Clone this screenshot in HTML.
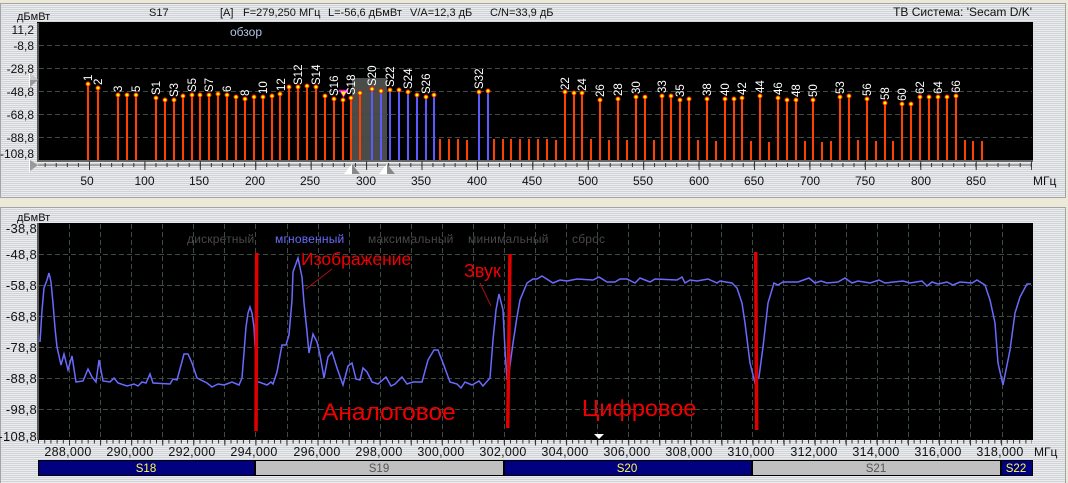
<!DOCTYPE html>
<html><head><meta charset="utf-8"><style>
html,body{margin:0;padding:0;width:1068px;height:483px;overflow:hidden;background:#ece9d8}
svg{display:block;font-family:"Liberation Sans",sans-serif}
</style></head><body>
<svg width="1068" height="483" viewBox="0 0 1068 483" xmlns="http://www.w3.org/2000/svg">
<defs><pattern id="st" width="4" height="2" patternUnits="userSpaceOnUse"><rect width="4" height="1" fill="#eaecee"/><rect y="1" width="4" height="1" fill="#d0d3d7"/></pattern></defs>
<rect width="1068" height="483" fill="#ece9d8"/>
<rect x="0.5" y="3.5" width="1065" height="194" fill="url(#st)" stroke="#a4a4a4"/>
<rect x="0.5" y="207.5" width="1065" height="280" fill="url(#st)" stroke="#a4a4a4"/>

<!-- top plot -->
<rect x="37" y="22" width="996" height="139" fill="#000"/>
<rect x="37" y="23" width="2" height="139" fill="#555"/>
<rect x="37" y="160" width="996" height="2" fill="#666"/>
<rect x="352" y="78" width="35" height="82" fill="#4a4c4a"/>
<path d="M39 45.5H1032M39 68.5H1032M39 91.5H1032M39 114.5H1032M39 137.5H1032" stroke="#3c4c42" stroke-dasharray="5 3"/>
<path d="M88 84V160M98 88V160M118 95V160M127 95V160M136 95V160M156 98V160M165 100V160M174 100V160M183 96V160M192 95V160M200 95V160M209 95V160M218 94V160M227 95V160M236 97V160M245 99V160M254 97V160M263 97V160M272 96V160M280 94V160M289 87V160M298 87V160M307 86V160M316 87V160M325 96V160M334 99V160M343 100V160M351 98V160M360 93V160M565 92V160M574 93V160M582 93V160M600 100V160M618 99V160M636 97V160M645 97V160M662 96V160M671 96V160M680 100V160M689 99V160M707 99V160M725 99V160M734 99V160M742 98V160M760 96V160M778 98V160M787 100V160M796 100V160M813 100V160M840 97V160M849 96V160M867 99V160M885 103V160M902 104V160M911 104V160M920 97V160M929 97V160M938 97V160M947 97V160M956 96V160M440 139V160M449 139V160M458 139V160M467 140V160M494 139V160M503 139V160M511 139V160M520 139V160M529 139V160M538 139V160M547 139V160M556 140V160M591 139V160M609 140V160M627 140V160M654 140V160M698 140V160M716 141V160M751 141V160M769 142V160M805 141V160M822 142V160M831 141V160M858 140V160M876 141V160M893 141V160M965 140V160M973 141V160M982 141V160" stroke="#ff4000" stroke-width="2" fill="none"/>
<path d="M372 89V160M381 91V160M390 90V160M399 90V160M408 92V160M417 95V160M426 97V160M434 95V160M479 92V160M488 91V160" stroke="#5a5aff" stroke-width="2" fill="none"/>
<path d="M88 84h.01M98 88h.01M118 95h.01M127 95h.01M136 95h.01M156 98h.01M165 100h.01M174 100h.01M183 96h.01M192 95h.01M200 95h.01M209 95h.01M218 94h.01M227 95h.01M236 97h.01M245 99h.01M254 97h.01M263 97h.01M272 96h.01M280 94h.01M289 87h.01M298 87h.01M307 86h.01M316 87h.01M325 96h.01M334 99h.01M343 100h.01M351 98h.01M360 93h.01M372 89h.01M381 91h.01M390 90h.01M399 90h.01M408 92h.01M417 95h.01M426 97h.01M434 95h.01M479 92h.01M488 91h.01M565 92h.01M574 93h.01M582 93h.01M600 100h.01M618 99h.01M636 97h.01M645 97h.01M662 96h.01M671 96h.01M680 100h.01M689 99h.01M707 99h.01M725 99h.01M734 99h.01M742 98h.01M760 96h.01M778 98h.01M787 100h.01M796 100h.01M813 100h.01M840 97h.01M849 96h.01M867 99h.01M885 103h.01M902 104h.01M911 104h.01M920 97h.01M929 97h.01M938 97h.01M947 97h.01M956 96h.01" stroke="#ff2000" stroke-width="5" stroke-linecap="round" fill="none"/>
<path d="M88 84h.01M98 88h.01M118 95h.01M127 95h.01M136 95h.01M156 98h.01M165 100h.01M174 100h.01M183 96h.01M192 95h.01M200 95h.01M209 95h.01M218 94h.01M227 95h.01M236 97h.01M245 99h.01M254 97h.01M263 97h.01M272 96h.01M280 94h.01M289 87h.01M298 87h.01M307 86h.01M316 87h.01M325 96h.01M334 99h.01M343 100h.01M351 98h.01M360 93h.01M372 89h.01M381 91h.01M390 90h.01M399 90h.01M408 92h.01M417 95h.01M426 97h.01M434 95h.01M479 92h.01M488 91h.01M565 92h.01M574 93h.01M582 93h.01M600 100h.01M618 99h.01M636 97h.01M645 97h.01M662 96h.01M671 96h.01M680 100h.01M689 99h.01M707 99h.01M725 99h.01M734 99h.01M742 98h.01M760 96h.01M778 98h.01M787 100h.01M796 100h.01M813 100h.01M840 97h.01M849 96h.01M867 99h.01M885 103h.01M902 104h.01M911 104h.01M920 97h.01M929 97h.01M938 97h.01M947 97h.01M956 96h.01" stroke="#ffff00" stroke-width="3" stroke-linecap="round" fill="none"/>
<path d="M339 90.5H348" stroke="#ff00ff" stroke-width="1.5"/><path d="M340 91H347L343.5 97Z" fill="#ffff00" stroke="#ff00ff" stroke-width=".7"/>

<g fill="#fff" font-size="11.5">
<text transform="translate(92,81) rotate(-90)">1</text>
<text transform="translate(102,85) rotate(-90)">2</text>
<text transform="translate(122,92) rotate(-90)">3</text>
<text transform="translate(140,92) rotate(-90)">5</text>
<text transform="translate(160,95) rotate(-90)">S1</text>
<text transform="translate(178,97) rotate(-90)">S3</text>
<text transform="translate(196,92) rotate(-90)">S5</text>
<text transform="translate(213,92) rotate(-90)">S7</text>
<text transform="translate(231,92) rotate(-90)">6</text>
<text transform="translate(249,96) rotate(-90)">8</text>
<text transform="translate(267,94) rotate(-90)">10</text>
<text transform="translate(285,91) rotate(-90)">12</text>
<text transform="translate(302,85) rotate(-90)">S12</text>
<text transform="translate(320,85) rotate(-90)">S14</text>
<text transform="translate(338,96) rotate(-90)">S16</text>
<text transform="translate(355,95) rotate(-90)">S18</text>
<text transform="translate(376,86) rotate(-90)">S20</text>
<text transform="translate(394,87) rotate(-90)">S22</text>
<text transform="translate(412,89) rotate(-90)">S24</text>
<text transform="translate(430,94) rotate(-90)">S26</text>
<text transform="translate(483,89) rotate(-90)">S32</text>
<text transform="translate(569,90) rotate(-90)">22</text>
<text transform="translate(586,91) rotate(-90)">24</text>
<text transform="translate(604,97) rotate(-90)">26</text>
<text transform="translate(622,96) rotate(-90)">28</text>
<text transform="translate(640,94) rotate(-90)">30</text>
<text transform="translate(666,93) rotate(-90)">33</text>
<text transform="translate(684,97) rotate(-90)">35</text>
<text transform="translate(711,96) rotate(-90)">38</text>
<text transform="translate(729,96) rotate(-90)">40</text>
<text transform="translate(746,95) rotate(-90)">42</text>
<text transform="translate(764,93) rotate(-90)">44</text>
<text transform="translate(782,95) rotate(-90)">46</text>
<text transform="translate(800,97) rotate(-90)">48</text>
<text transform="translate(817,97) rotate(-90)">50</text>
<text transform="translate(844,94) rotate(-90)">53</text>
<text transform="translate(871,96) rotate(-90)">56</text>
<text transform="translate(889,100) rotate(-90)">58</text>
<text transform="translate(906,101) rotate(-90)">60</text>
<text transform="translate(924,94) rotate(-90)">62</text>
<text transform="translate(942,94) rotate(-90)">64</text>
<text transform="translate(960,93) rotate(-90)">66</text>
</g>
<text x="230" y="36" font-size="12" fill="#b4c4e4">обзор</text>

<path d="M38 165H1032" stroke="#666"/>
<line x1="44.66" y1="165" x2="1032" y2="165" stroke="#333" stroke-width="4" stroke-dasharray="1 10.08"/>
<line x1="89" y1="165.5" x2="1032" y2="165.5" stroke="#333" stroke-width="9" stroke-dasharray="1 54.42"/>
<path d="M30 73L38 80L30 87Z" fill="#999"/><path d="M30 73L38 80H30Z" fill="#c8c8c8"/><path d="M29.500 72V88" stroke="#fff"/>
<path d="M30 160L38 165L30 171Z" fill="#999"/><path d="M29.500 159V172" stroke="#fff"/>
<path d="M344 174L352 164L360 174Z" fill="#fff"/><path d="M352 164L360 174H352Z" fill="#888"/>
<path d="M379 174L387 164L395 174Z" fill="#fff"/><path d="M387 164L395 174H387Z" fill="#888"/>

<!-- header -->
<g font-size="11" fill="#111">
<text x="17" y="20" font-size="11">дБмВт</text>
<text x="149" y="16">S17</text>
<text x="220" y="16">[A]</text>
<text x="243" y="16">F=279,250 МГц</text>
<text x="328" y="16">L=-56,6 дБмВт</text>
<text x="410" y="16">V/A=12,3 дБ</text>
<text x="490" y="16">C/N=33,9 дБ</text>
<text x="1032" y="16" text-anchor="end" font-size="12">ТВ Система: 'Secam D/K'</text>
</g>
<g font-size="12" fill="#111" text-anchor="end">
<text x="34" y="34">11,2</text><text x="34" y="50">-8,8</text><text x="34" y="73">-28,8</text><text x="34" y="96">-48,8</text><text x="34" y="119">-68,8</text><text x="34" y="142">-88,8</text><text x="34" y="158">-108,8</text>
</g>
<g font-size="12" fill="#111" text-anchor="middle">
<text x="87" y="185">50</text><text x="144.500" y="185">100</text><text x="199" y="185">150</text><text x="255" y="185">200</text><text x="310" y="185">250</text><text x="366" y="185">300</text><text x="421" y="185">350</text><text x="477" y="185">400</text><text x="532" y="185">450</text><text x="588" y="185">500</text><text x="643" y="185">550</text><text x="699" y="185">600</text><text x="754" y="185">650</text><text x="810" y="185">700</text><text x="865" y="185">750</text><text x="921" y="185">800</text><text x="976" y="185">850</text>
</g>
<text x="1033" y="185" font-size="12" fill="#111">МГц</text>

<!-- bottom plot -->
<rect x="37" y="223" width="996" height="217" fill="#000"/>
<rect x="37" y="223" width="2" height="217" fill="#555"/>
<path d="M39 254.500H1032M39 285.500H1032M39 316.500H1032M39 347.500H1032M39 378.500H1032M39 409.500H1032" stroke="#3c4c42" stroke-dasharray="5 3"/>
<path d="M69.500 224V439M100.500 224V439M131.500 224V439M162.500 224V439M193.500 224V439M224.500 224V439M255.500 224V439M287.500 224V439M318.500 224V439M349.500 224V439M380.500 224V439M411.500 224V439M442.500 224V439M473.500 224V439M504.500 224V439M535.500 224V439M566.500 224V439M597.500 224V439M628.500 224V439M659.500 224V439M691.500 224V439M721.500 224V439M752.500 224V439M783.500 224V439M815.500 224V439M846.500 224V439M877.500 224V439M908.500 224V439M939.500 224V439M970.500 224V439M1002.500 224V439" stroke="#3c4c42" stroke-dasharray="5 3"/>
<path d="M40 342L42 310L44 288L47 280L49 273L51 282L53 303L55 328L57 347L61 365L64 354L68 370L72 356L76 382L83 381L88 369L92 377L96 382L99 360L103 381L110 382L114 378L118 383L127 386L134 384L138 386L142 382L146 383L150 374L153 383L170 384L173 379L177 380L184 354L188 354L192 363L197 378L207 383L212 387L218 384L224 385L232 382L239 385L242 378L246 327L248 313L250 307L252 313L254 327L257 382L259 382L267 385L271 382L273 384L277 372L282 345L286 345L289 335L292 300L293 272L298 258L302 277L304 303L307 332L309 353L313 334L317 342L320 355L324 378L328 357L332 352L337 368L343 385L348 366L352 363L356 379L360 380L363 368L367 372L372 382L378 384L386 377L391 386L395 384L402 377L407 384L413 382L422 382L428 360L434 350L438 350L443 363L450 382L457 384L461 388L465 382L472 385L479 381L483 386L490 378L493 340L496 310L499 294L503 310L505 350L507 380L509 373L513 343L517 317L520 300L527 283L533 279L537 279L542 276L553 283L560 280L567 281L577 279L593 280L599 277L607 282L615 282L620 279L627 279L635 283L640 278L650 282L655 279L677 280L682 277L685 283L690 280L697 281L708 279L717 283L720 281L732 283L737 288L742 303L745 323L750 363L755 383L759 377L763 347L768 303L774 283L778 285L783 282L798 282L809 278L815 283L821 281L827 283L838 282L845 278L852 283L858 281L870 283L879 280L885 283L903 281L910 283L922 281L927 286L932 282L938 284L947 282L953 285L960 282L972 283L977 280L985 285L990 300L995 323L998 363L1003 385L1010 350L1015 313L1020 297L1027 284L1031 284" fill="none" stroke="#6a6aff" stroke-width="1.500"/>
<path d="M256.700 253L256 431M510 254L507.700 428M755.700 252L756.700 430" stroke="#e00000" stroke-width="3.500" fill="none"/>
<path d="M332 269L306 289M480 283L491 306" stroke="#a81010" fill="none"/>
<g fill="#f00000">
<text x="301" y="265" font-size="17.500">Изображение</text>
<text x="464" y="277" font-size="18">Звук</text>
<text x="322" y="420" font-size="24.500">Аналоговое</text>
<text x="582" y="416" font-size="23.500">Цифровое</text>
</g>
<g font-size="12" letter-spacing=".2">
<text x="187" y="243" fill="#484848">дискретный</text>
<text x="275" y="243" fill="#6a6aff">мгновенный</text>
<text x="368" y="243" fill="#484848">максимальный</text>
<text x="468" y="243" fill="#484848">минимальный</text>
<text x="572" y="243" fill="#484848">сброс</text>
</g>
<path d="M594 434H604L599 439Z" fill="#fff"/>
<line x1="38" y1="441.500" x2="1032" y2="441.500" stroke="#333" stroke-width="4" stroke-dasharray="1 5.210"/>
<line x1="69" y1="442.500" x2="1032" y2="442.500" stroke="#333" stroke-width="6" stroke-dasharray="1 30.070"/>
<g font-size="12.500" fill="#111" text-anchor="middle" letter-spacing=".3">
<text x="68" y="456">288,000</text><text x="130" y="456">290,000</text><text x="192" y="456">292,000</text><text x="254" y="456">294,000</text><text x="317" y="456">296,000</text><text x="379" y="456">298,000</text><text x="441" y="456">300,000</text><text x="503" y="456">302,000</text><text x="565" y="456">304,000</text><text x="627" y="456">306,000</text><text x="689" y="456">308,000</text><text x="751" y="456">310,000</text><text x="814" y="456">312,000</text><text x="876" y="456">314,000</text><text x="938" y="456">316,000</text><text x="1000" y="456">318,000</text>
</g>
<text x="1034" y="456" font-size="12" fill="#111">МГц</text>
<g font-size="13" fill="#111" text-anchor="end" letter-spacing=".3">
<text x="37" y="233">-38,8</text><text x="37" y="259">-48,8</text><text x="37" y="290">-58,8</text><text x="37" y="321">-68,8</text><text x="37" y="352">-78,8</text><text x="37" y="383">-88,8</text><text x="37" y="414">-98,8</text><text x="37" y="441">-108,8</text>
</g>
<text x="17" y="221" font-size="11" fill="#111">дБмВт</text>

<!-- channel bar -->
<rect x="38" y="460" width="995" height="16" fill="#000"/>
<rect x="39" y="461" width="215" height="14" fill="#000080"/>
<rect x="256" y="461" width="247" height="14" fill="#c0c0c0"/>
<rect x="505" y="461" width="246" height="14" fill="#000080"/>
<rect x="753" y="461" width="247" height="14" fill="#c0c0c0"/>
<rect x="1002" y="461" width="30" height="14" fill="#000080"/>
<g font-size="11.500" text-anchor="middle">
<text x="146" y="472" fill="#ffff40">S18</text>
<text x="379" y="472" fill="#555">S19</text>
<text x="627" y="472" fill="#ffff40">S20</text>
<text x="876" y="472" fill="#555">S21</text>
<text x="1016" y="472" fill="#ffff40">S22</text>
</g>
</svg>
</body></html>
